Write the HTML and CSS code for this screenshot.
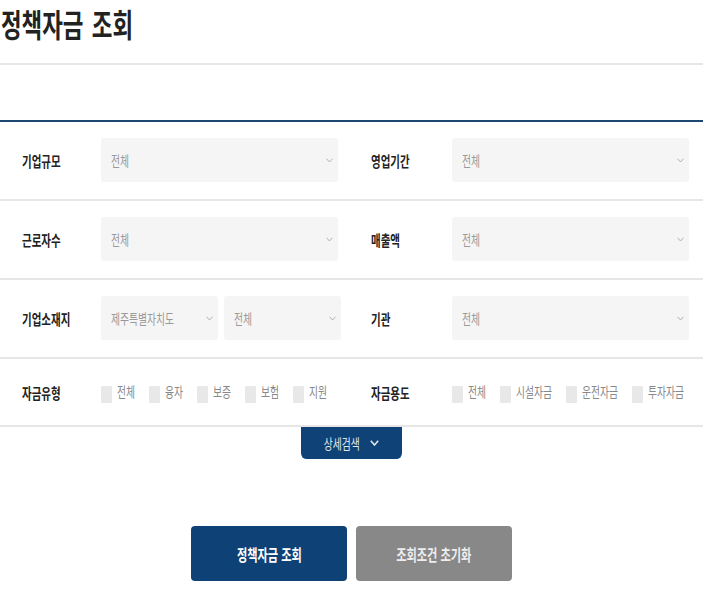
FILE: index.html
```html
<!DOCTYPE html>
<html lang="ko">
<head>
<meta charset="utf-8">
<title>정책자금 조회</title>
<link rel="stylesheet" href="styles.css">
</head>
<body>
<div class="page">
  <h1 class="title"><span class="cx">정책자금 조회</span></h1>
  <div class="title-rule"></div>
  <div class="tab-area"></div>

  <div class="form">
    <div class="row">
      <div class="label"><span class="cx">기업규모</span></div>
      <div class="select"><span class="cx">전체</span><svg class="chev" viewBox="0 0 7 5"><polyline points="0.6,0.8 3.5,4 6.4,0.8"/></svg></div>
      <div class="label"><span class="cx">영업기간</span></div>
      <div class="select"><span class="cx">전체</span><svg class="chev" viewBox="0 0 7 5"><polyline points="0.6,0.8 3.5,4 6.4,0.8"/></svg></div>
    </div>
    <div class="row">
      <div class="label"><span class="cx">근로자수</span></div>
      <div class="select"><span class="cx">전체</span><svg class="chev" viewBox="0 0 7 5"><polyline points="0.6,0.8 3.5,4 6.4,0.8"/></svg></div>
      <div class="label"><span class="cx">매출액</span></div>
      <div class="select"><span class="cx">전체</span><svg class="chev" viewBox="0 0 7 5"><polyline points="0.6,0.8 3.5,4 6.4,0.8"/></svg></div>
    </div>
    <div class="row">
      <div class="label"><span class="cx">기업소재지</span></div>
      <div class="select-pair">
        <div class="select"><span class="cx">제주특별자치도</span><svg class="chev" viewBox="0 0 7 5"><polyline points="0.6,0.8 3.5,4 6.4,0.8"/></svg></div>
        <div class="select"><span class="cx">전체</span><svg class="chev" viewBox="0 0 7 5"><polyline points="0.6,0.8 3.5,4 6.4,0.8"/></svg></div>
      </div>
      <div class="label"><span class="cx">기관</span></div>
      <div class="select"><span class="cx">전체</span><svg class="chev" viewBox="0 0 7 5"><polyline points="0.6,0.8 3.5,4 6.4,0.8"/></svg></div>
    </div>
    <div class="row row-checks">
      <div class="label"><span class="cx">자금유형</span></div>
      <div class="checks checks-type">
        <label class="check"><span class="box"></span><span class="cx">전체</span></label>
        <label class="check"><span class="box"></span><span class="cx">융자</span></label>
        <label class="check"><span class="box"></span><span class="cx">보증</span></label>
        <label class="check"><span class="box"></span><span class="cx">보험</span></label>
        <label class="check"><span class="box"></span><span class="cx">지원</span></label>
      </div>
      <div class="label"><span class="cx">자금용도</span></div>
      <div class="checks checks-use">
        <label class="check"><span class="box"></span><span class="cx">전체</span></label>
        <label class="check"><span class="box"></span><span class="cx">시설자금</span></label>
        <label class="check"><span class="box"></span><span class="cx">운전자금</span></label>
        <label class="check"><span class="box"></span><span class="cx">투자자금</span></label>
      </div>
    </div>
  </div>

  <div class="more-wrap">
    <button class="more" type="button"><span class="cx cx-c">상세검색</span><svg class="more-chev" viewBox="0 0 9 6"><polyline points="0.8,0.8 4.5,5 8.2,0.8"/></svg></button>
  </div>

  <div class="actions">
    <button class="btn btn-primary" type="button"><span class="cx cx-c">정책자금 조회</span></button>
    <button class="btn btn-reset" type="button"><span class="cx cx-c">조회조건 초기화</span></button>
  </div>
</div>
</body>
</html>
```

FILE: styles.css
```css
html, body {
  margin: 0;
  padding: 0;
  background: #fff;
}

body {
  font-family: "Noto Sans CJK KR", "Noto Sans", sans-serif;
  color: #222;
}

.page {
  width: 703px;
}

/* condensed lettering, as in the reference */
.cx {
  display: inline-block;
  white-space: nowrap;
  transform: scaleX(0.7);
  transform-origin: 0 50%;
}

.cx-c {
  transform-origin: 50% 50%;
}

.title {
  margin: 0;
  padding: 0 0 0 1px;
  font-size: 32px;
  line-height: 47px;
  font-weight: 700;
  color: #222;
  word-spacing: 3px;
}

.title-rule {
  height: 2px;
  margin-top: 16px;
  background: #e6e6e6;
}

.tab-area {
  height: 55px;
}

.form {
  border-top: 2px solid #1d4673;
}

.row {
  display: grid;
  grid-template-columns: 79px 270px 81px 237px;
  align-items: center;
  padding: 16px 0 17px 22px;
  border-bottom: 2px solid #e6e6e6;
}

.row-checks {
  height: 68px;
  box-sizing: border-box;
  padding: 0 0 0 22px;
}

.label {
  font-size: 15px;
  font-weight: 700;
  color: #222;
}

.select {
  width: 237px;
  height: 44px;
  box-sizing: border-box;
  display: flex;
  align-items: center;
  justify-content: space-between;
  padding: 0 5px 0 10px;
  background: #f5f5f5;
  border-radius: 3px;
  font-size: 14px;
  color: #999;
  overflow: hidden;
}

.select-pair {
  display: flex;
  gap: 6px;
}

.select-pair .select {
  width: 117px;
}

.chev {
  flex: none;
  width: 7px;
  height: 5px;
  fill: none;
  stroke: #a8a8a8;
  stroke-width: 0.9;
}

.checks {
  display: grid;
}

.checks-type {
  grid-template-columns: repeat(5, 48px);
}

.checks-use {
  grid-template-columns: 48px 66px 66px 66px;
}

.check {
  display: flex;
  align-items: flex-start;
  gap: 5px;
  font-size: 14px;
  line-height: 20px;
  color: #888;
  white-space: nowrap;
}

.box {
  flex: none;
  width: 11px;
  height: 17px;
  margin-top: 5px;
  background: #e8e8e8;
  border-radius: 1px;
}

.more-wrap {
  display: flex;
  justify-content: center;
}

.more {
  width: 101px;
  height: 32px;
  padding: 0 8px 0 0;
  border: 0;
  display: flex;
  align-items: center;
  justify-content: center;
  gap: 3px;
  background: #0f4276;
  color: #e2e8ef;
  border-radius: 0 0 5px 5px / 0 0 6px 6px;
  font-family: inherit;
  font-size: 14px;
}

.more-chev {
  flex: none;
  width: 9px;
  height: 6px;
  fill: none;
  stroke: #e2e8ef;
  stroke-width: 1.6;
}

.actions {
  display: flex;
  justify-content: center;
  gap: 9px;
  margin-top: 67px;
}

.btn {
  width: 156px;
  height: 55px;
  padding: 0;
  border: 0;
  border-radius: 4px;
  font-family: inherit;
  font-size: 16px;
  font-weight: 700;
  color: #fff;
}

.btn-primary {
  background: #0e4176;
}

.btn-reset {
  background: #888;
  color: #eee;
}
```
